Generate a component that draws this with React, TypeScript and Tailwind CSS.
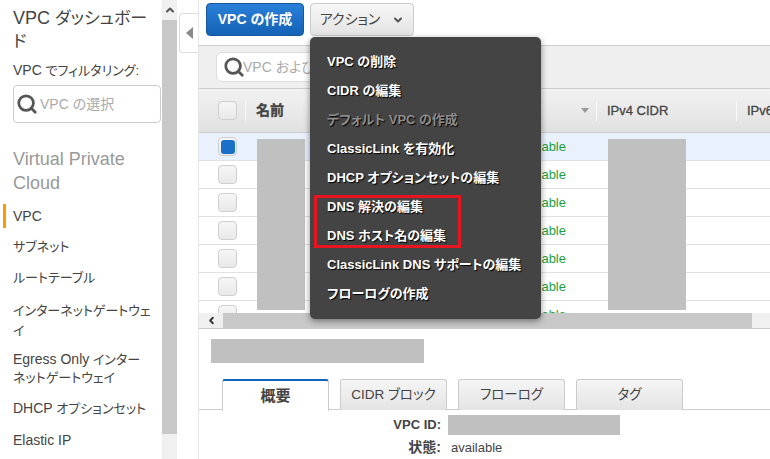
import React from "react";
import { ChevronDown, ChevronLeft, ChevronUp, Search } from "lucide-react";

const menuItems: { label: string; disabled?: boolean }[] = [
  { label: "VPC の削除" },
  { label: "CIDR の編集" },
  { label: "デフォルト VPC の作成", disabled: true },
  { label: "ClassicLink を有効化" },
  { label: "DHCP オプションセットの編集" },
  { label: "DNS 解決の編集" },
  { label: "DNS ホスト名の編集" },
  { label: "ClassicLink DNS サポートの編集" },
  { label: "フローログの作成" },
];

const rows = [0, 1, 2, 3, 4, 5, 6];
const tabs = ["概要", "CIDR ブロック", "フローログ", "タグ"];

// latin runs sit a little larger than the kana around them
function Latin({ children }: { children: React.ReactNode }): JSX.Element {
  return <span className="text-[14px]">{children}</span>;
}

function Checkbox({ checked = false }: { checked?: boolean }): JSX.Element {
  return (
    <div className="flex h-[19px] w-[19px] items-center justify-center rounded-[4px] border border-[#cfcfcf] bg-gradient-to-b from-[#f6f6f6] to-[#e9e9e9]">
      {checked && <div className="h-[14px] w-[14px] rounded-[3px] bg-[#1a6fc9]" />}
    </div>
  );
}

function Sidebar(): JSX.Element {
  return (
    <aside className="w-[162px] shrink-0 overflow-hidden pl-[13px] pr-px text-[#444]">
      <h1 className="mt-[7px] pr-[6px] text-[18px] leading-[23px] text-[#444]">
        VPC <span className="text-[17px]">ダッシュボード</span>
      </h1>
      <div className="mt-[8px] text-[13px] leading-[18px]">
        <Latin>VPC</Latin> でフィルタリング:
      </div>
      <div className="mt-[5px] flex h-[38px] items-center gap-[2px] rounded-[4px] border border-[#ccc] pl-[2px] text-[14px] text-[#aaa]">
        <Search size={22} strokeWidth={3} className="text-[#555]" />
        VPC の選択
      </div>
      <div className="mt-[24px] text-[18px] leading-[24px] text-[#999]">Virtual Private Cloud</div>
      <div className="relative mt-[9px] flex h-[24px] items-center text-[14px]">
        <div className="absolute left-[-10px] top-0 h-[24px] w-[3px] bg-[#f90]" />
        VPC
      </div>
      <ul className="mt-[9px] flex flex-col gap-[11px] pr-[9px] text-[13px] leading-[20px]">
        <li>サブネット</li>
        <li>ルートテーブル</li>
        <li className="mb-[-2px] mt-[2px]">インターネットゲートウェイ</li>
        <li className="leading-[18px]">
          <Latin>Egress Only</Latin> インターネットゲートウェイ
        </li>
        <li>
          <Latin>DHCP</Latin> オプションセット
        </li>
        <li>
          <Latin>Elastic IP</Latin>
        </li>
      </ul>
    </aside>
  );
}

function ActionsMenu(): JSX.Element {
  return (
    <div className="absolute left-[111px] top-[37px] z-20 flex h-[282px] w-[231px] flex-col rounded-[5px] bg-[#444] px-[17px] py-[10px] shadow-[0_2px_6px_rgba(0,0,0,0.45)]">
      {menuItems.map((item) => (
        <div
          key={item.label}
          className={`flex h-[29px] shrink-0 items-center whitespace-nowrap pt-px text-[13px] font-bold [text-shadow:1px_1px_1px_#000] ${item.disabled ? "text-[#8c8c8c]" : "text-white"}`}
        >
          {item.label}
        </div>
      ))}
      <div className="absolute left-[4px] top-[158px] h-[53px] w-[147px] border-[3px] border-[#e8141f]" />
    </div>
  );
}

function VpcTable(): JSX.Element {
  return (
    <div className="relative h-[225px] overflow-hidden">
      <div className="flex h-[45px] items-center border-y border-[#ccc] bg-gradient-to-b from-[#f2f2f2] to-[#e1e1e1] text-[13px] text-[#444] [-webkit-text-stroke:0.3px_#444]">
        <div className="flex w-[46px] shrink-0 justify-end pr-[8px]">
          <Checkbox />
        </div>
        <div className="h-[20px] w-px shrink-0 bg-[#fafafa]" />
        <div className="w-[300px] shrink-0 pl-[10px] text-[14px] font-bold">名前</div>
        <div className="flex w-[50px] shrink-0 justify-end pr-[7px]">
          <div className="h-0 w-0 border-x-[4px] border-t-[5px] border-x-transparent border-t-[#999]" />
        </div>
        <div className="h-[20px] w-px shrink-0 bg-[#fafafa]" />
        <div className="w-[139px] shrink-0 pl-[10px]">IPv4 CIDR</div>
        <div className="h-[20px] w-px shrink-0 bg-[#fafafa]" />
        <div className="pl-[10px]">IPv6</div>
      </div>
      {rows.map((row) => (
        <div
          key={row}
          className={`flex h-[28px] items-center border-b border-[#e2e2e2] text-[13px] text-[#1d9f3f] ${row === 0 ? "bg-[#e9f1fc]" : "bg-white"}`}
        >
          <div className="flex w-[46px] justify-end pr-[8px]">
            <Checkbox checked={row === 0} />
          </div>
          <div className="w-[321px] text-right">available</div>
        </div>
      ))}
      <div className="absolute left-[58px] top-[51px] h-[171px] w-[48px] bg-[#c0c0c0]" />
      <div className="absolute left-[409px] top-[51px] h-[171px] w-[78px] bg-[#c0c0c0]" />
    </div>
  );
}

function DetailPane(): JSX.Element {
  return (
    <div>
      <div className="ml-[12px] mt-[10px] h-[24px] w-[213px] bg-[#c0c0c0]" />
      <div className="mt-[16px] flex h-[31px] gap-[11px] border-b border-[#ccc] pl-[23px]">
        {tabs.map((tab, i) => (
          <div
            key={tab}
            className={
              i === 0
                ? "z-10 flex h-[32px] w-[107px] items-center justify-center rounded-t-[3px] border-x border-t-2 border-[#ccc] border-t-[#1166bb] bg-white text-[15px] font-bold text-[#444]"
                : "flex h-[31px] w-[107px] items-center justify-center rounded-t-[3px] border-x border-t border-[#ccc] bg-gradient-to-b from-[#f5f5f5] to-[#e4e4e4] text-[13.5px] text-[#444]"
            }
          >
            {tab}
          </div>
        ))}
      </div>
      <div className="mt-[5px] grid grid-cols-[242px_1fr] items-center gap-x-[7px] text-[13px] text-[#444]">
        <div className="text-right text-[13px] font-bold">VPC ID:</div>
        <div className="h-[20px] w-[172px] bg-[#c0c0c0]" />
        <div className="mt-[2px] text-right text-[14px] font-bold">状態:</div>
        <div className="mt-[2px] pl-[3px]">available</div>
      </div>
    </div>
  );
}

export default function App(): JSX.Element {
  return (
    <div className="flex h-[459px] w-[770px] overflow-hidden bg-white font-['Liberation_Sans','Noto_Sans_CJK_JP',sans-serif] [font-feature-settings:'palt']">
      <Sidebar />

      <div className="flex w-[15px] shrink-0 flex-col bg-[#f0f0f0]">
        <div className="flex h-[20px] items-center justify-center">
          <ChevronUp size={12} strokeWidth={4} className="text-[#555]" />
        </div>
        <div className="h-[414px] bg-[#c8c8c8]" />
      </div>

      <div className="w-[22px] shrink-0 border-r border-[#e6e6e6] pl-[2px] pt-[13px]">
        <div className="flex h-[40px] w-[20px] items-center justify-center rounded-l-[4px] border border-r-0 border-[#ddd] text-[#888]">
          <div className="h-0 w-0 border-y-[6px] border-r-[7px] border-y-transparent border-r-[#888]" />
        </div>
      </div>

      <main className="relative min-w-0 flex-1">
        <div className="flex h-[45px] items-start gap-[6px] pl-[7px] pt-[3px]">
          <button className="h-[33px] w-[98px] rounded-[4px] border border-[#15589f] bg-gradient-to-b from-[#2a80d8] to-[#1262b6] text-[14px] font-bold text-white">
            VPC の作成
          </button>
          <button className="flex h-[33px] w-[104px] items-center justify-center gap-[12px] rounded-[4px] border border-[#ccc] bg-gradient-to-b from-[#f7f7f7] to-[#e4e4e4] text-[14px] text-[#444]">
            アクション
            <ChevronDown size={12} strokeWidth={4} className="text-[#555]" />
          </button>
        </div>

        <div className="flex h-[43px] items-center border-t border-[#ccc] bg-[#efefef] pl-[17px]">
          <div className="flex h-[30px] w-[300px] items-center rounded-[6px] border border-[#ddd] bg-white pl-[6px] text-[14px] text-[#aaa]">
            <Search size={22} strokeWidth={3} className="mr-[-2px] text-[#555]" />
            VPC および
          </div>
        </div>

        <VpcTable />

        <div className="flex h-[16px] items-center border-b border-[#ccc] bg-[#f0f0f0]">
          <div className="flex w-[24px] justify-center">
            <ChevronLeft size={11} strokeWidth={4} className="text-[#333]" />
          </div>
          <div className="h-[15px] w-[529px] bg-[#c8c8c8]" />
        </div>

        <DetailPane />
        <ActionsMenu />
      </main>
    </div>
  );
}
